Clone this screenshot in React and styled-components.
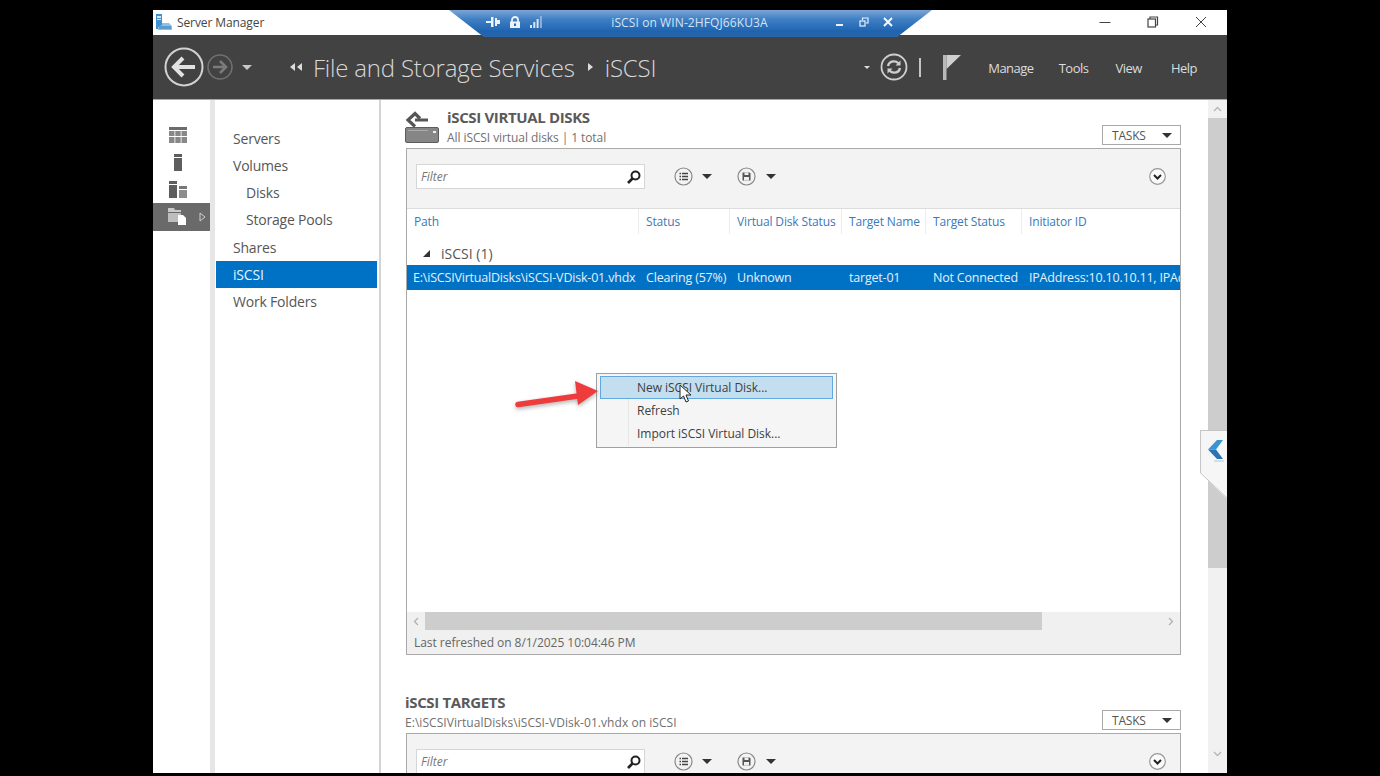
import React from 'react';
import styled, { createGlobalStyle } from 'styled-components';

const GlobalStyle = createGlobalStyle`
  html, body {
    margin: 0;
    padding: 0;
    background: #000;
    overflow: hidden;
  }
  * { box-sizing: border-box; }
`;

const Page = styled.div`
  width: 1380px;
  height: 776px;
  padding: 10px 0 0 153px;
  background: #000;
  font-family: "Open Sans", "Noto Sans", sans-serif;
`;

const Win = styled.div`
  position: relative;
  width: 1074px;
  height: 763px;
  background: #fff;
  display: flex;
  flex-direction: column;
  overflow: hidden;
`;

const TitleBar = styled.div`
  height: 25px;
  flex: none;
  display: flex;
  align-items: center;
  padding-left: 3px;
  background: #fff;
`;

const AppName = styled.span`
  margin-left: 4px;
  font-size: 12px;
  letter-spacing: -0.1px;
  color: #444;
`;

const WinButtons = styled.div`
  margin-left: auto;
  display: flex;
  align-items: center;
  padding-right: 20px;
  gap: 36px;
  height: 100%;
  padding-bottom: 2px;
`;

const RdpBar = styled.div`
  position: absolute;
  left: 296px;
  top: 0;
  width: 483px;
  height: 27px;
  clip-path: polygon(0 0, 100% 0, 92.8% 100%, 7.2% 100%);
  background: linear-gradient(180deg, #7ba6d6 0%, #3f7fc4 35%, #1f63b0 80%, #2a66a8 100%);
  display: flex;
  align-items: center;
  padding: 0 39px 3px 37px;
  z-index: 3;
`;

const RdpIcons = styled.div`
  display: flex;
  align-items: center;
  gap: 9px;
`;

const RdpText = styled.span`
  flex: 1;
  text-align: center;
  font-size: 12px;
  letter-spacing: 0.1px;
  color: #d5e3f3;
  padding-left: 2px;
`;

const RdpButtons = styled.div`
  display: flex;
  align-items: center;
  gap: 14px;
`;

const Header = styled.header`
  height: 65px;
  flex: none;
  background: #424242;
  border-bottom: 1px solid #a8a8a8;
  display: flex;
  align-items: center;
  padding-left: 11px;
  color: #e4e4e4;
`;

const NavCluster = styled.div`
  display: flex;
  align-items: center;
  gap: 3px;
  width: 126px;
`;

const Breadcrumb = styled.div`
  display: flex;
  align-items: center;
  font-size: 24px;
  font-weight: 300;
  letter-spacing: -0.2px;
  color: #d8d8d8;
`;

const CrumbArrow = styled.svg`
  margin: 0 ${(p) => p.$right}px 0 ${(p) => p.$left}px;
`;

const HeaderRight = styled.div`
  margin-left: auto;
  display: flex;
  align-items: center;
`;

const Divider = styled.span`
  width: 2px;
  height: 19px;
  margin: 0 22px 0 11px;
  background: #c4c4c4;
`;

const HeaderMenu = styled.span`
  font-size: 13px;
  color: #dcdcdc;
  margin-left: ${(p) => p.$gap}px;
  margin-right: ${(p) => p.$end || 0}px;
  letter-spacing: -0.5px;
  padding-top: 1px;
`;

const Body = styled.div`
  flex: 1;
  min-height: 0;
  display: flex;
`;

const IconRail = styled.nav`
  width: 62px;
  flex: none;
  padding-top: 21px;
  border-right: 5px solid #e6e6e6;
`;

const RailItem = styled.div`
  height: 27.4px;
  display: flex;
  align-items: center;
  justify-content: center;
  position: relative;
  background: ${(p) => (p.$active ? '#6a6a6a' : 'transparent')};
  padding-right: 8px;
`;

const RailArrow = styled.svg`
  position: absolute;
  right: 4px;
  top: 9px;
`;

const NavList = styled.div`
  width: 166px;
  flex: none;
  padding: 24.5px 2px 0 1px;
  border-right: 2px solid #d4d4d4;
`;

const NavItem = styled.div`
  height: 27.25px;
  display: flex;
  align-items: center;
  font-size: 14px;
  letter-spacing: -0.2px;
  padding-left: ${(p) => (p.$sub ? 30 : 17)}px;
  background: ${(p) => (p.$active ? '#0072c6' : 'transparent')};
  color: ${(p) => (p.$active ? '#e8f2fb' : '#565656')};
`;

const Content = styled.main`
  width: 827px;
  flex: none;
  overflow: hidden;
  padding: 0 27px 0 24px;
`;

const SectionHead = styled.div`
  display: flex;
  align-items: flex-end;
  height: ${(p) => p.$height}px;
  padding-bottom: 1px;
`;

const SectionIcon = styled.div`
  width: 42px;
  height: 33px;
  margin-bottom: 3px;
  flex: none;
`;

const SectionText = styled.div`
  display: flex;
  flex-direction: column;
`;

const SectionTitle = styled.h2`
  margin: 0;
  font-size: 15px;
  line-height: 23px;
  font-weight: 700;
  letter-spacing: -0.35px;
  color: #5a5a5a;
`;

const SectionSub = styled.div`
  font-size: 12px;
  line-height: 18px;
  letter-spacing: ${(p) => (p.$wide ? '0.05px' : '-0.08px')};
  color: #707070;
`;

const TasksButton = styled.div`
  margin: 0 0 2px auto;
  width: 79px;
  height: 20px;
  border: 1px solid #a8a8a8;
  background: #fff;
  display: flex;
  align-items: center;
  padding-left: 9px;
  font-size: 12px;
  letter-spacing: -0.2px;
  color: #555;
  justify-content: space-between;
  padding-right: 8px;
`;

const Caret = styled.span`
  display: inline-block;
  width: 0;
  height: 0;
  margin: 0 ${(p) => p.$mr || 0}px 0 ${(p) => p.$ml || 0}px;
  border-left: ${(p) => p.$size || 5}px solid transparent;
  border-right: ${(p) => p.$size || 5}px solid transparent;
  border-top: ${(p) => p.$size || 5}px solid ${(p) => p.$color || '#333'};
`;

const Panel = styled.section`
  width: 775px;
  margin-left: 1px;
  height: ${(p) => p.$height}px;
  border: 1px solid #a9a9a9;
  display: flex;
  flex-direction: column;
  flex: none;
`;

const PanelTools = styled.div`
  height: 60px;
  flex: none;
  background: #f3f3f3;
  border-bottom: 1px solid #dcdcdc;
  display: flex;
  align-items: flex-start;
  padding: 15px 14px 0 9px;
`;

const FilterBox = styled.div`
  width: 229px;
  height: 25px;
  background: #fff;
  border: 1px solid #d6d6d6;
  display: flex;
  align-items: center;
  justify-content: space-between;
  padding: 0 2px 0 4px;
  font-size: 12px;
  font-style: italic;
  color: #777;
`;

const ToolGroup = styled.div`
  display: flex;
  align-items: center;
  gap: ${(p) => p.$inner}px;
  margin-left: ${(p) => p.$gap}px;
  height: 25px;
`;

const ExpandIcon = styled.div`
  margin-left: auto;
  height: 25px;
  display: flex;
  align-items: center;
`;

const Columns = styled.div`
  display: grid;
  grid-template-columns: 231px 91px 112px 84px 96px 1fr;
  height: ${(p) => p.$height}px;
  flex: none;
  overflow: hidden;
  white-space: nowrap;
`;

const HeadCell = styled.div`
  padding-left: ${(p) => (p.$first ? 6 : 7)}px;
  font-size: 12px;
  line-height: 26px;
  letter-spacing: -0.15px;
  color: #3b79b8;
  border-left: 1px solid ${(p) => (p.$first ? 'transparent' : '#ececec')};
`;

const GroupRow = styled.div`
  height: 31px;
  flex: none;
  display: flex;
  align-items: center;
  gap: 11px;
  padding: 8px 0 0 16px;
  font-size: 14px;
  letter-spacing: 0;
  color: #555;
`;

const GroupArrow = styled.span`
  width: 0;
  height: 0;
  border-left: 7px solid transparent;
  border-bottom: 7px solid #333;
`;

const SelectedRow = styled(Columns)`
  background: #0072c6;
`;

const RowCell = styled.div`
  padding-left: ${(p) => (p.$first ? 6 : 8)}px;
  font-size: 12.5px;
  line-height: 25px;
  letter-spacing: -0.2px;
  color: #e4f0fa;
  overflow: hidden;
`;

const EmptyArea = styled.div`
  flex: 1;
`;

const HScroll = styled.div`
  height: 18px;
  flex: none;
  background: #f0f0f0;
  display: flex;
  align-items: center;
  padding: 0 6px;
`;

const HThumb = styled.div`
  width: 617px;
  height: 18px;
  margin-left: 6px;
  margin-right: auto;
  background: #cdcdcd;
`;

const PanelFoot = styled.div`
  height: 24px;
  flex: none;
  background: #f0f0f0;
  padding-left: 7px;
  font-size: 12px;
  line-height: 26px;
  letter-spacing: -0.04px;
  color: #666;
`;

const VScroll = styled.div`
  width: 19px;
  flex: none;
  background: #f1f1f1;
  display: flex;
  flex-direction: column;
  align-items: center;
`;

const VArrow = styled.div`
  height: ${(p) => p.$height}px;
  flex: none;
  display: flex;
  align-items: center;
  justify-content: center;
  margin-top: ${(p) => p.$top || 0}px;
`;

const VThumb = styled.div`
  width: 100%;
  height: 450px;
  flex: none;
  background: #cdcdcd;
`;

const Flyout = styled.div`
  position: absolute;
  left: 1047px;
  top: 420px;
  width: 27px;
  height: 69px;
  background: #f6f6f6;
  border-top: 1px solid #c6c6c6;
  border-left: 1px solid #c6c6c6;
  clip-path: polygon(0 0, 100% 0, 100% 100%, 0 62%);
  display: flex;
  justify-content: flex-start;
  padding: 9px 0 0 6px;
  z-index: 2;
`;

const FlyoutEdge = styled.svg`
  position: absolute;
  left: 1047px;
  top: 462px;
  z-index: 3;
`;

const Menu = styled.div`
  position: absolute;
  left: 443px;
  top: 363px;
  width: 241px;
  height: 75px;
  padding: 2px 3px;
  background: #f5f5f5;
  border: 1px solid #a0a0a0;
  z-index: 4;
`;

const MenuGutter = styled.div`
  position: absolute;
  left: 31px;
  top: 1px;
  bottom: 1px;
  width: 1px;
  background: #e6e6e6;
`;

const MenuItem = styled.div`
  position: relative;
  height: 23px;
  display: flex;
  align-items: center;
  padding-left: 36px;
  font-size: 12px;
  letter-spacing: -0.03px;
  color: #3e3e3e;
  background: ${(p) => (p.$hover ? '#c3deef' : 'transparent')};
  border: 1px solid ${(p) => (p.$hover ? '#62a8dc' : 'transparent')};
`;

const Overlay = styled.svg`
  position: absolute;
  left: ${(p) => p.$x}px;
  top: ${(p) => p.$y}px;
  z-index: 5;
  overflow: visible;
`;

const RedArrow = styled(Overlay)`
  filter: drop-shadow(0 2px 2px rgba(0, 0, 0, 0.3));
`;

const ServerIcon = () => (
  <svg width="17" height="17" viewBox="0 0 17 17">
    <rect x="0" y="0" width="6" height="15" fill="#3f8fd0" />
    <rect x="1" y="2" width="4" height="2" fill="#d5e8f7" />
    <rect x="1" y="5" width="4" height="1" fill="#d5e8f7" />
    <path d="M6 9h7l3 3v4H2v-3l4-2z" fill="#8fbfe2" />
    <rect x="3" y="12" width="12" height="3" fill="#5a9bd0" />
  </svg>
);

const Minimize = () => (
  <svg width="12" height="12" viewBox="0 0 12 12"><path d="M0.5 6.5h11" stroke="#444" strokeWidth="1" /></svg>
);
const Restore = () => (
  <svg width="12" height="12" viewBox="0 0 12 12" fill="none" stroke="#444" strokeWidth="1.2">
    <rect x="1" y="3" width="7.5" height="8" />
    <path d="M3 3V1h7.5v8H8.5" />
  </svg>
);
const Close = () => (
  <svg width="12" height="12" viewBox="0 0 12 12"><path d="M1 1l10 10M11 1L1 11" stroke="#444" strokeWidth="1" /></svg>
);

const BackIcon = () => (
  <svg width="40" height="40" viewBox="0 0 40 40" fill="none">
    <circle cx="20" cy="20" r="18.5" stroke="#d2d2d2" strokeWidth="2" />
    <path d="M31 20H11M19 11l-9 9 9 9" stroke="#e2e2e2" strokeWidth="4" />
  </svg>
);
const ForwardIcon = () => (
  <svg width="26" height="26" viewBox="0 0 26 26" fill="none">
    <circle cx="13" cy="13" r="12" stroke="#707070" strokeWidth="1.6" />
    <path d="M6 13h13M13 7l6 6-6 6" stroke="#7b7b7b" strokeWidth="2.6" />
  </svg>
);
const RefreshIcon = () => (
  <svg width="28" height="28" viewBox="0 0 28 28" fill="none" stroke="#cfcfcf">
    <circle cx="14" cy="14" r="12.5" strokeWidth="1.8" />
    <path d="M8 13c.6-3 3-4.6 6-4.6 1.8 0 3.2.6 4.3 1.8" strokeWidth="2.4" />
    <path d="M20 15c-.6 3-3 4.6-6 4.6-1.8 0-3.2-.6-4.3-1.8" strokeWidth="2.4" />
    <path d="M20.5 7.5v5h-5zM7.500 20.500v-5h5z" fill="#cfcfcf" stroke="none" />
  </svg>
);
const FlagIcon = () => (
  <svg width="19" height="27" viewBox="0 0 19 27">
    <rect x="0" y="1" width="3.5" height="25" fill="#b8b8b8" />
    <path d="M3.500 1H18L3.500 15z" fill="#cfcfcf" />
  </svg>
);

const PinIcon = () => (
  <svg width="14" height="10" viewBox="0 0 14 10" fill="#eaf2fb">
    <rect x="0" y="4" width="7" height="2" />
    <rect x="5" y="0" width="2.5" height="10" />
    <rect x="9" y="1" width="2" height="8" />
    <rect x="9" y="3" width="5" height="4" />
  </svg>
);
const LockIcon = () => (
  <svg width="12" height="12" viewBox="0 0 12 12">
    <path d="M3 6V4a3 3 0 0 1 6 0v2" fill="none" stroke="#eaf2fb" strokeWidth="1.8" />
    <rect x="1" y="5.5" width="10" height="6.5" fill="#eaf2fb" />
    <rect x="5" y="7.5" width="2" height="2.5" fill="#2a6cb6" />
  </svg>
);
const SignalIcon = () => (
  <svg width="12" height="12" viewBox="0 0 12 12" fill="#dbe7f5">
    <rect x="0" y="9" width="2" height="3" />
    <rect x="3.3" y="6" width="2" height="6" />
    <rect x="6.6" y="3" width="2" height="9" />
    <rect x="9.9" y="0" width="2" height="12" fill="#8fb2da" />
  </svg>
);
const RdpMin = () => (
  <svg width="10" height="10" viewBox="0 0 10 10"><rect x="1" y="7" width="7" height="2" fill="#eaf2fb" /></svg>
);
const RdpRestore = () => (
  <svg width="10" height="10" viewBox="0 0 10 10" fill="none" stroke="#eaf2fb" strokeWidth="1.2">
    <rect x="1" y="4" width="5" height="5" />
    <path d="M3.500 3V1H9v5H7" />
  </svg>
);
const RdpClose = () => (
  <svg width="10" height="10" viewBox="0 0 10 10"><path d="M1 1l8 8M9 1L1 9" stroke="#f4f8fd" strokeWidth="2" /></svg>
);

const DashboardIcon = () => (
  <svg width="18" height="16" viewBox="0 0 18 16">
    <rect width="18" height="3" fill="#6c6c6c" />
    <path d="M0 4h5.500v5H0zM6.300 4h5.400v5H6.300zM12.500 4H18v5h-5.500zM0 10h5.500v6H0zM6.300 10h5.400v6H6.300zM12.500 10H18v6h-5.500z" fill="#888" />
  </svg>
);
const LocalIcon = () => (
  <svg width="8" height="17" viewBox="0 0 8 17">
    <rect width="8" height="3" fill="#5e5e5e" />
    <rect y="4" width="8" height="13" fill="#5e5e5e" />
  </svg>
);
const AllServersIcon = () => (
  <svg width="18" height="17" viewBox="0 0 18 17">
    <rect width="8" height="3" fill="#5e5e5e" />
    <rect y="4" width="8" height="13" fill="#5e5e5e" />
    <rect x="10" y="5" width="8" height="3" fill="#777" />
    <rect x="10" y="9" width="8" height="8" fill="#8d8d8d" />
  </svg>
);
const FilesIcon = () => (
  <svg width="19" height="17" viewBox="0 0 19 17">
    <path d="M0 0h6l1 2h6v2H0z" fill="#c9c9c9" />
    <rect y="5" width="13" height="9" fill="#bdbdbd" />
    <path d="M10 7h5l3 3v7h-8z" fill="#fff" />
  </svg>
);

const DiskIcon = () => (
  <svg width="34" height="33" viewBox="0 0 34 33">
    <path d="M15 7.500L10 2.500 3 9l7 6.500" fill="none" stroke="#555" strokeWidth="3.2" />
    <path d="M10 9h13" stroke="#555" strokeWidth="3" />
    <rect x="0.500" y="16.500" width="33" height="15" rx="1.5" fill="#868686" stroke="#5c5c5c" />
    <rect x="28" y="20" width="3" height="2" fill="#eee" />
    <rect x="3" y="19" width="20" height="1" fill="#a9a9a9" />
  </svg>
);

const SearchIcon = () => (
  <svg width="16" height="16" viewBox="0 0 16 16" fill="none" stroke="#222">
    <circle cx="9.500" cy="6.500" r="4" strokeWidth="2" />
    <path d="M6.500 9.500L2 14" strokeWidth="2.6" />
  </svg>
);
const ListIcon = () => (
  <svg width="19" height="19" viewBox="0 0 19 19" fill="none" stroke="#888">
    <circle cx="9.500" cy="9.500" r="8.500" strokeWidth="1.2" />
    <path d="M5.500 6.500h1.500M8 6.500h6M5.500 9.500h1.500M8 9.500h6M5.500 12.500h1.500M8 12.500h6" stroke="#444" strokeWidth="1.4" />
  </svg>
);
const SaveIcon = () => (
  <svg width="19" height="19" viewBox="0 0 19 19" fill="none" stroke="#888">
    <circle cx="9.500" cy="9.500" r="8.500" strokeWidth="1.2" />
    <path d="M5.500 5.500h7l1 1v7h-8z" fill="#555" stroke="none" />
    <path d="M7.500 5.500h4v2.500h-4zM7 10h5v3.500H7z" fill="#eee" stroke="none" />
  </svg>
);
const ChevronCircle = () => (
  <svg width="17" height="17" viewBox="0 0 17 17" fill="none">
    <circle cx="8.500" cy="8.500" r="7.800" stroke="#999" strokeWidth="1.2" fill="#fafafa" />
    <path d="M5 7l3.500 3.500L12 7" stroke="#222" strokeWidth="2" />
  </svg>
);

const Toolbar = () => (
  <PanelTools>
    <FilterBox>
      Filter
      <SearchIcon />
    </FilterBox>
    <ToolGroup $gap={29} $inner={9}>
      <ListIcon />
      <Caret $size={5} />
    </ToolGroup>
    <ToolGroup $gap={25} $inner={10}>
      <SaveIcon />
      <Caret $size={5} />
    </ToolGroup>
    <ExpandIcon>
      <ChevronCircle />
    </ExpandIcon>
  </PanelTools>
);

const heads = ['Path', 'Status', 'Virtual Disk Status', 'Target Name', 'Target Status', 'Initiator ID'];
const row = [
  'E:\\iSCSIVirtualDisks\\iSCSI-VDisk-01.vhdx',
  'Clearing (57%)',
  'Unknown',
  'target-01',
  'Not Connected',
  'IPAddress:10.10.10.11, IPAddress:10.10.10.12',
];

function App() {
  return (
    <Page>
      <GlobalStyle />
      <Win>
        <TitleBar>
          <ServerIcon />
          <AppName>Server Manager</AppName>
          <WinButtons>
            <Minimize />
            <Restore />
            <Close />
          </WinButtons>
        </TitleBar>

        <RdpBar>
          <RdpIcons>
            <PinIcon />
            <LockIcon />
            <SignalIcon />
          </RdpIcons>
          <RdpText>iSCSI on WIN-2HFQJ66KU3A</RdpText>
          <RdpButtons>
            <RdpMin />
            <RdpRestore />
            <RdpClose />
          </RdpButtons>
        </RdpBar>

        <Header>
          <NavCluster>
            <BackIcon />
            <ForwardIcon />
            <Caret $size={5} $color="#c8c8c8" $ml={6} />
          </NavCluster>
          <Breadcrumb>
            <CrumbArrow $left={0} $right={10} width="13" height="8" viewBox="0 0 13 8" fill="#dcdcdc">
              <path d="M0 4l5-4v8zM7 4l5-4v8z" />
            </CrumbArrow>
            File and Storage Services
            <CrumbArrow $left={12} $right={12} width="6" height="8" viewBox="0 0 6 8" fill="#dcdcdc">
              <path d="M6 4L1 0v8z" />
            </CrumbArrow>
            iSCSI
          </Breadcrumb>
          <HeaderRight>
            <Caret $size={3} $color="#ddd" $mr={10} />
            <RefreshIcon />
            <Divider />
            <FlagIcon />
            <HeaderMenu $gap={26}>Manage</HeaderMenu>
            <HeaderMenu $gap={25}>Tools</HeaderMenu>
            <HeaderMenu $gap={27}>View</HeaderMenu>
            <HeaderMenu $gap={29} $end={30}>Help</HeaderMenu>
          </HeaderRight>
        </Header>

        <Body>
          <IconRail>
            <RailItem><DashboardIcon /></RailItem>
            <RailItem><LocalIcon /></RailItem>
            <RailItem><AllServersIcon /></RailItem>
            <RailItem $active>
              <FilesIcon />
              <RailArrow width="7" height="10" viewBox="0 0 7 10" fill="none">
                <path d="M1 1l5 4-5 4z" stroke="#cfcfcf" strokeWidth="1" />
              </RailArrow>
            </RailItem>
          </IconRail>

          <NavList>
            <NavItem>Servers</NavItem>
            <NavItem>Volumes</NavItem>
            <NavItem $sub>Disks</NavItem>
            <NavItem $sub>Storage Pools</NavItem>
            <NavItem>Shares</NavItem>
            <NavItem $active>iSCSI</NavItem>
            <NavItem>Work Folders</NavItem>
          </NavList>

          <Content>
            <SectionHead $height={48}>
              <SectionIcon><DiskIcon /></SectionIcon>
              <SectionText>
                <SectionTitle>iSCSI VIRTUAL DISKS</SectionTitle>
                <SectionSub>All iSCSI virtual disks | 1 total</SectionSub>
              </SectionText>
              <TasksButton>TASKS<Caret $size={5} /></TasksButton>
            </SectionHead>
            <Panel $height={507}>
              <Toolbar />
              <Columns $height={25}>
                {heads.map((h, i) => (
                  <HeadCell key={h} $first={i === 0}>{h}</HeadCell>
                ))}
              </Columns>
              <GroupRow>
                <GroupArrow />
                iSCSI (1)
              </GroupRow>
              <SelectedRow $height={25}>
                {row.map((c, i) => (
                  <RowCell key={c} $first={i === 0}>{c}</RowCell>
                ))}
              </SelectedRow>
              <EmptyArea />
              <HScroll>
                <svg width="6" height="9" viewBox="0 0 6 9" fill="none"><path d="M5 1L1.500 4.500 5 8" stroke="#b0b0b0" strokeWidth="1.3" /></svg>
                <HThumb />
                <svg width="6" height="9" viewBox="0 0 6 9" fill="none"><path d="M1 1l3.500 3.500L1 8" stroke="#b0b0b0" strokeWidth="1.3" /></svg>
              </HScroll>
              <PanelFoot>Last refreshed on 8/1/2025 10:04:46 PM</PanelFoot>
            </Panel>

            <SectionHead $height={78}>
              <SectionText>
                <SectionTitle>iSCSI TARGETS</SectionTitle>
                <SectionSub $wide>E:\iSCSIVirtualDisks\iSCSI-VDisk-01.vhdx on iSCSI</SectionSub>
              </SectionText>
              <TasksButton>TASKS<Caret $size={5} /></TasksButton>
            </SectionHead>
            <Panel $height={200}>
              <Toolbar />
            </Panel>
          </Content>

          <VScroll>
            <VArrow $height={18}>
              <svg width="9" height="6" viewBox="0 0 9 6" fill="none"><path d="M1 5l3.500-3.500L8 5" stroke="#b5b5b5" strokeWidth="1.3" /></svg>
            </VArrow>
            <VThumb />
            <VArrow $height={18} $top={177}>
              <svg width="9" height="6" viewBox="0 0 9 6" fill="none"><path d="M1 1l3.500 3.500L8 1" stroke="#b5b5b5" strokeWidth="1.3" /></svg>
            </VArrow>
          </VScroll>
        </Body>

        <Flyout>
          <svg width="17" height="22" viewBox="0 0 17 22">
            <path d="M10 0h6l-7 9.500h-8z" fill="#3b93d4" />
            <path d="M1 9.500h8l7 9.500h-6z" fill="#2a74b2" />
            <path d="M7 21h10" stroke="#a8c8e2" strokeWidth="1" />
          </svg>
        </Flyout>
        <FlyoutEdge width="27" height="30" viewBox="0 0 27 30">
          <path d="M0.500 0v1L27 26" fill="none" stroke="#c6c6c6" />
        </FlyoutEdge>

        <Menu>
          <MenuGutter />
          <MenuItem $hover>New iSCSI Virtual Disk...</MenuItem>
          <MenuItem>Refresh</MenuItem>
          <MenuItem>Import iSCSI Virtual Disk...</MenuItem>
        </Menu>

        <RedArrow $x={361} $y={371} width="86" height="30" viewBox="0 0 86 30">
          <path d="M4 23.500L64 15" stroke="#ee3b3b" strokeWidth="5.5" strokeLinecap="round" />
          <path d="M84 10L61 0l3 24z" fill="#ee3b3b" />
        </RedArrow>

        <Overlay $x={526} $y={374} width="14" height="20" viewBox="0 0 14 20">
          <path d="M1 1v14l3.500-3 2.500 6 2.500-1-2.500-6H12z" fill="#fff" stroke="#222" strokeWidth="1" />
        </Overlay>
      </Win>
    </Page>
  );
}

export default App;
